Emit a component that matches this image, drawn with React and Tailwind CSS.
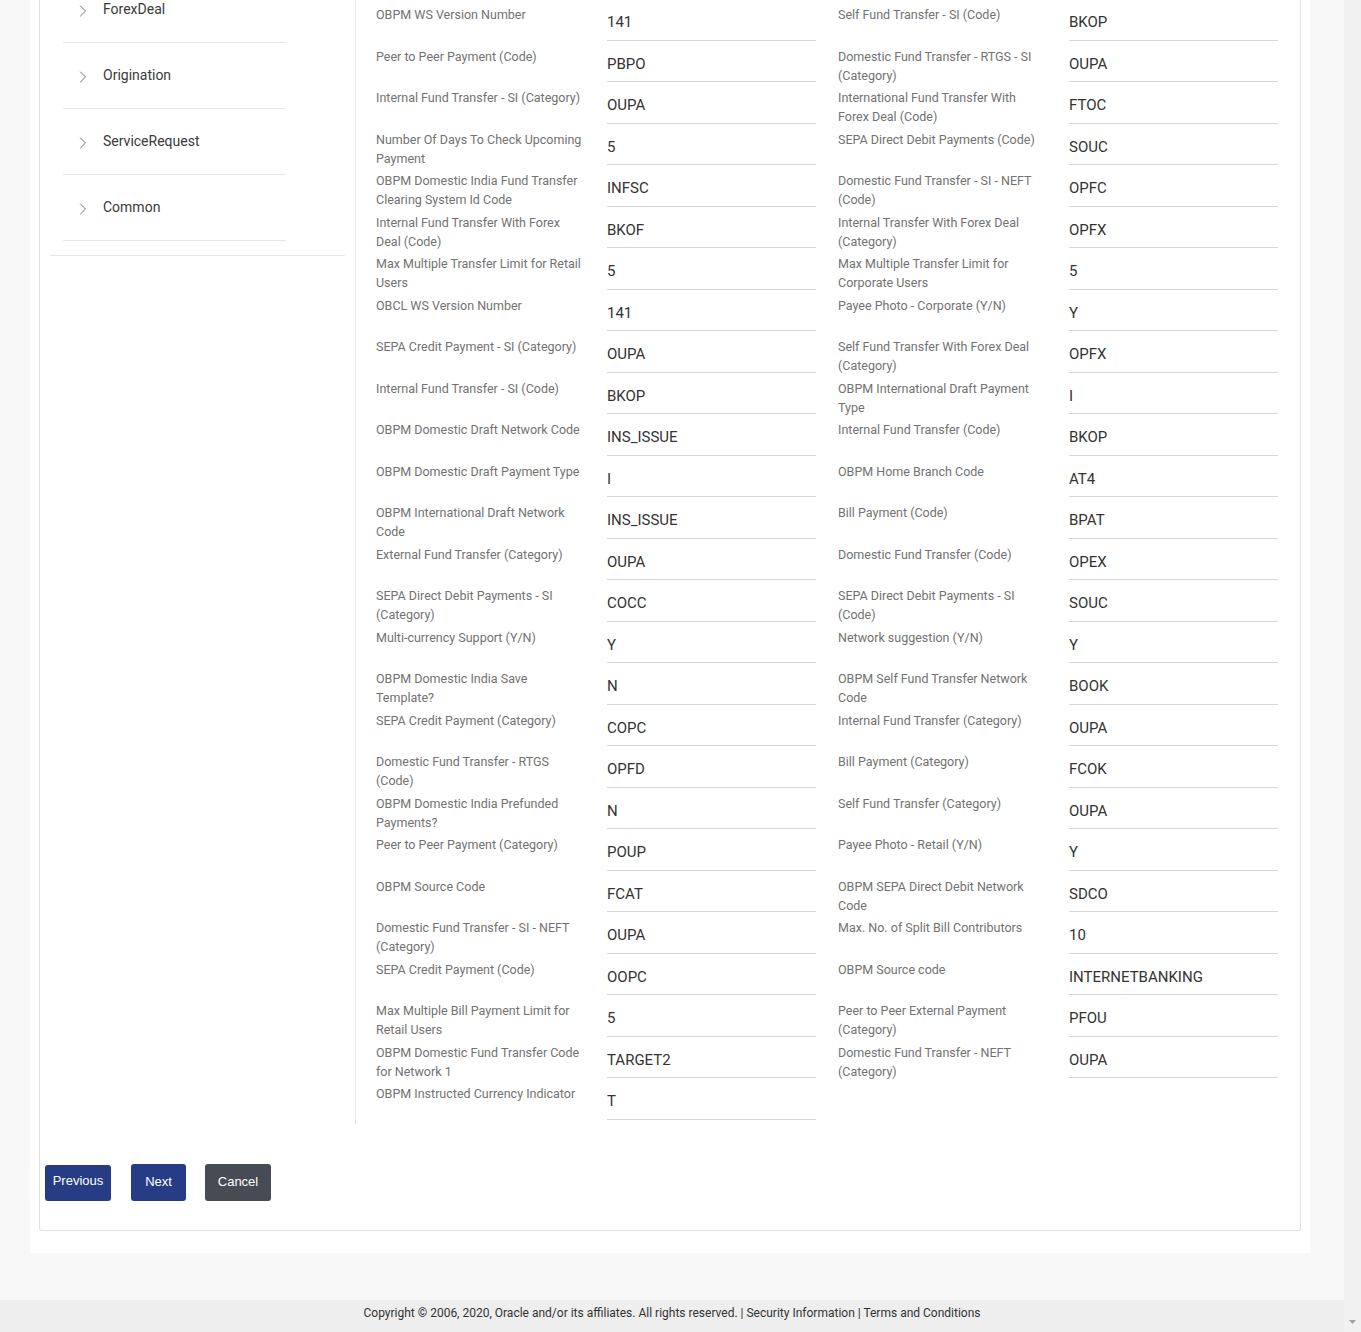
import React from 'react';
import { ChevronRight } from 'lucide-react';

const leftFields = [
  ['OBPM WS Version Number', '141'],
  ['Peer to Peer Payment (Code)', 'PBPO'],
  ['Internal Fund Transfer - SI (Category)', 'OUPA'],
  ['Number Of Days To Check Upcoming Payment', '5'],
  ['OBPM Domestic India Fund Transfer Clearing System Id Code', 'INFSC'],
  ['Internal Fund Transfer With Forex Deal (Code)', 'BKOF'],
  ['Max Multiple Transfer Limit for Retail Users', '5'],
  ['OBCL WS Version Number', '141'],
  ['SEPA Credit Payment - SI (Category)', 'OUPA'],
  ['Internal Fund Transfer - SI (Code)', 'BKOP'],
  ['OBPM Domestic Draft Network Code', 'INS_ISSUE'],
  ['OBPM Domestic Draft Payment Type', 'I'],
  ['OBPM International Draft Network Code', 'INS_ISSUE'],
  ['External Fund Transfer (Category)', 'OUPA'],
  ['SEPA Direct Debit Payments - SI (Category)', 'COCC'],
  ['Multi-currency Support (Y/N)', 'Y'],
  ['OBPM Domestic India Save Template?', 'N'],
  ['SEPA Credit Payment (Category)', 'COPC'],
  ['Domestic Fund Transfer - RTGS (Code)', 'OPFD'],
  ['OBPM Domestic India Prefunded Payments?', 'N'],
  ['Peer to Peer Payment (Category)', 'POUP'],
  ['OBPM Source Code', 'FCAT'],
  ['Domestic Fund Transfer - SI - NEFT (Category)', 'OUPA'],
  ['SEPA Credit Payment (Code)', 'OOPC'],
  ['Max Multiple Bill Payment Limit for Retail Users', '5'],
  ['OBPM Domestic Fund Transfer Code for Network 1', 'TARGET2'],
  ['OBPM Instructed Currency Indicator', 'T'],
];

const rightFields = [
  ['Self Fund Transfer - SI (Code)', 'BKOP'],
  ['Domestic Fund Transfer - RTGS - SI (Category)', 'OUPA'],
  ['International Fund Transfer With Forex Deal (Code)', 'FTOC'],
  ['SEPA Direct Debit Payments (Code)', 'SOUC'],
  ['Domestic Fund Transfer - SI - NEFT (Code)', 'OPFC'],
  ['Internal Transfer With Forex Deal (Category)', 'OPFX'],
  ['Max Multiple Transfer Limit for Corporate Users', '5'],
  ['Payee Photo - Corporate (Y/N)', 'Y'],
  ['Self Fund Transfer With Forex Deal (Category)', 'OPFX'],
  ['OBPM International Draft Payment Type', 'I'],
  ['Internal Fund Transfer (Code)', 'BKOP'],
  ['OBPM Home Branch Code', 'AT4'],
  ['Bill Payment (Code)', 'BPAT'],
  ['Domestic Fund Transfer (Code)', 'OPEX'],
  ['SEPA Direct Debit Payments - SI (Code)', 'SOUC'],
  ['Network suggestion (Y/N)', 'Y'],
  ['OBPM Self Fund Transfer Network Code', 'BOOK'],
  ['Internal Fund Transfer (Category)', 'OUPA'],
  ['Bill Payment (Category)', 'FCOK'],
  ['Self Fund Transfer (Category)', 'OUPA'],
  ['Payee Photo - Retail (Y/N)', 'Y'],
  ['OBPM SEPA Direct Debit Network Code', 'SDCO'],
  ['Max. No. of Split Bill Contributors', '10'],
  ['OBPM Source code', 'INTERNETBANKING'],
  ['Peer to Peer External Payment (Category)', 'PFOU'],
  ['Domestic Fund Transfer - NEFT (Category)', 'OUPA'],
];

const menu = ['ForexDeal', 'Origination', 'ServiceRequest', 'Common'];

function Field({ label, value }) {
  return (
    <div className="flex h-[41.5px]">
      <div className="w-[231px] pr-[20px] pt-[6px] text-[12.5px] leading-[19px] text-[#727272]">{label}</div>
      <div className="w-[209px] border-b border-[#d6d6d6] pt-[13px] text-[15px] leading-[20px] text-[#333]">{value}</div>
    </div>
  );
}

function Sidebar() {
  return (
    <div className="w-[295px] -mt-[23px] border-b border-[#e6e6e6] pb-[14px]">
      {menu.map((item) => (
        <div key={item} className="ml-[13px] mr-[59px] flex h-[66px] items-center border-b border-[#e6e6e6] pl-[10px]">
          <ChevronRight size={20} strokeWidth={1} className="mt-[2px] text-[#555]" />
          <span className="ml-[10px] text-[14px] text-[#3a3a3a]">{item}</span>
        </div>
      ))}
    </div>
  );
}

export default function App() {
  return (
    <div className="flex min-h-[1332px] bg-[#f8f8f8] font-['Roboto',sans-serif]">
      <div className="flex w-[1344px] flex-col">
        <div className="ml-[30px] w-[1280px] bg-white px-[9px] pb-[22px]">
          <div className="rounded-b-[3px] border border-t-0 border-[#e2e2e2]">
            <div className="flex items-start pl-[10px]">
              <Sidebar />
              <div className="-mt-px ml-[10px] flex gap-[22px] border-l border-[#e6e6e6] pb-[4px] pl-[20px]">
                <div>
                  {leftFields.map(([l, v]) => (
                    <Field key={l} label={l} value={v} />
                  ))}
                </div>
                <div>
                  {rightFields.map(([l, v]) => (
                    <Field key={l} label={l} value={v} />
                  ))}
                </div>
              </div>
            </div>
            <div className="mt-[41px] flex items-start gap-[20px] pb-[29px] pl-[5px] font-['Liberation_Sans',Arial,sans-serif] text-[13px] text-white">
              <button className="h-[36px] w-[66px] rounded-[3px] bg-[#263d85] pb-[3px]">Previous</button>
              <button className="-mt-px h-[37px] w-[55px] rounded-[3px] bg-[#263d85]">Next</button>
              <button className="-ml-px -mt-px h-[37px] w-[66px] rounded-[3px] bg-[#474b53]">Cancel</button>
            </div>
          </div>
        </div>
        <div className="h-[47px]" />
        <div className="flex h-[32px] justify-center bg-[#eeeeee] pt-[5px] text-[12px] leading-[17px] text-[#333]">
          Copyright © 2006, 2020, Oracle and/or its affiliates. All rights reserved. | Security Information | Terms and Conditions
        </div>
      </div>
      <div className="flex w-[17px] flex-col justify-end bg-[#f1f1f1] pb-[6px]">
        <svg width="17" height="8" viewBox="0 0 17 8">
          <polygon points="5,2 12,2 8.5,6" fill="#a3a3a3" />
        </svg>
      </div>
    </div>
  );
}
